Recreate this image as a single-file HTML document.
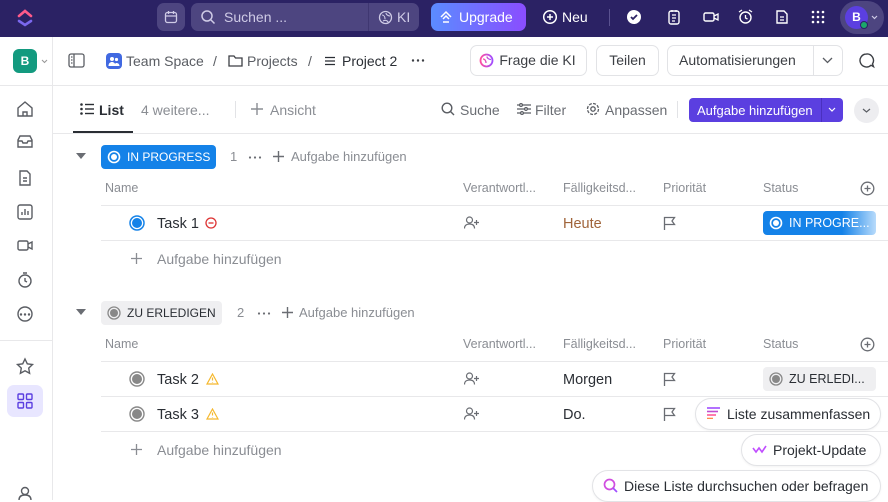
<!DOCTYPE html>
<html><head><meta charset="utf-8"><style>
*{box-sizing:border-box;margin:0;padding:0}
body{width:888px;height:500px;overflow:hidden;font-family:"Liberation Sans",sans-serif;background:#fff;position:relative;color:#2a2e34}
.a{position:absolute}
.top{left:0;top:0;width:888px;height:37px;background:#2b2264}
.t{position:absolute;white-space:nowrap}
svg{position:absolute}
.line{position:absolute;height:1px;background:#e8e8ea}
.g{color:#8a8d93}
.btn{position:absolute;border:1px solid #e2e3e6;border-radius:7px;height:31px;top:45px;font-size:14px;color:#3c3f44;line-height:29px;text-align:center}
.pill{position:absolute;border:1px solid #e2e3e6;border-radius:16px;height:32px;background:#fff;font-size:14px;color:#2a2e34;line-height:30px;box-shadow:0 1px 2px rgba(0,0,0,.05)}
.dots{position:absolute;font-size:16px;color:#6a6d73;font-weight:bold;letter-spacing:0}
</style></head><body>
<div class="a top"></div>
<svg style="left:17px;top:8px" width="16" height="20" viewBox="0 0 16 20"><path d="M2 8 L8 3 L14 8" stroke="#ff5a8a" stroke-width="2.6" fill="none" stroke-linecap="round"/><path d="M2 13 L8 17 L14 13" stroke="#7b68ee" stroke-width="2.6" fill="none" stroke-linecap="round"/></svg>
<div class="a" style="left:157px;top:3px;width:28px;height:28px;background:#4d4580;border-radius:7px"></div>
<svg style="left:164px;top:10px" width="14" height="14" viewBox="0 0 14 14"><rect x="1.5" y="2.5" width="11" height="10" rx="2" fill="none" stroke="#cfcbe6" stroke-width="1.3"/><path d="M1.5 6h11M4.5 1v3M9.5 1v3" stroke="#cfcbe6" stroke-width="1.3"/></svg>
<div class="a" style="left:191px;top:3px;width:228px;height:28px;background:#4d4580;border-radius:7px"></div>
<div class="a" style="left:368px;top:3px;width:1px;height:28px;background:#3f3771"></div>
<svg style="left:200px;top:9px" width="16" height="16" viewBox="0 0 16 16"><circle cx="7" cy="7" r="5" fill="none" stroke="#cfcbe6" stroke-width="1.5"/><path d="M11 11l3.5 3.5" stroke="#cfcbe6" stroke-width="1.5"/></svg>
<div class="t" style="left:224px;top:9px;font-size:14px;color:#cfcbe6">Suchen ...</div>
<svg style="left:378px;top:10px" width="15" height="15" viewBox="0 0 15 15"><circle cx="7.5" cy="7.5" r="6" fill="none" stroke="#cfcbe6" stroke-width="1.3"/><path d="M4 5c2 0 3 2 3 4M8 3c0 2 3 3 4 3M5 11c2-1 4-1 5 1" stroke="#cfcbe6" stroke-width="1.1" fill="none"/></svg>
<div class="t" style="left:397px;top:9px;font-size:14px;color:#cfcbe6">KI</div>
<div class="a" style="left:431px;top:3px;width:95px;height:28px;border-radius:7px;background:linear-gradient(90deg,#5b8cff,#8a4dff)"></div>
<svg style="left:439px;top:10px" width="14" height="14" viewBox="0 0 14 14"><path d="M2 7L7 2L12 7M4 9l3-3 3 3M4 12h6" stroke="#fff" stroke-width="1.5" fill="none"/></svg>
<div class="t" style="left:459px;top:9px;font-size:14px;color:#fff">Upgrade</div>
<svg style="left:542px;top:9px" width="16" height="16" viewBox="0 0 16 16"><circle cx="8" cy="8" r="6.3" fill="none" stroke="#fff" stroke-width="1.5"/><path d="M8 5v6M5 8h6" stroke="#fff" stroke-width="1.5"/></svg>
<div class="t" style="left:562px;top:9px;font-size:14px;color:#fff">Neu</div>
<div class="a" style="left:609px;top:9px;width:1px;height:17px;background:#5a5290"></div>
<svg style="left:626px;top:9px" width="16" height="16" viewBox="0 0 16 16"><circle cx="8" cy="8" r="7" fill="#fff"/><path d="M5 8l2 2 4-4" stroke="#2b2264" stroke-width="1.8" fill="none"/></svg>
<svg style="left:667px;top:9px" width="14" height="16" viewBox="0 0 14 16"><rect x="2" y="2" width="10" height="13" rx="2" fill="none" stroke="#fff" stroke-width="1.4"/><path d="M5 6h4M5 9h4M5 12h3M5 1v2M9 1v2" stroke="#fff" stroke-width="1.2"/></svg>
<svg style="left:703px;top:10px" width="16" height="14" viewBox="0 0 16 14"><rect x="1" y="3" width="10" height="8" rx="1.5" fill="none" stroke="#fff" stroke-width="1.4"/><path d="M11 6l4-2v6l-4-2" fill="none" stroke="#fff" stroke-width="1.3"/></svg>
<svg style="left:737px;top:8px" width="17" height="17" viewBox="0 0 17 17"><circle cx="8.5" cy="9.5" r="5.5" fill="none" stroke="#fff" stroke-width="1.4"/><path d="M8.5 7v3l2 1M2 4l3-2M15 4l-3-2" stroke="#fff" stroke-width="1.3" fill="none"/></svg>
<svg style="left:775px;top:9px" width="14" height="16" viewBox="0 0 14 16"><path d="M2 2h7l3 3v9H2z" fill="none" stroke="#fff" stroke-width="1.4"/><path d="M5 8h4M5 11h4" stroke="#fff" stroke-width="1.2"/></svg>
<svg style="left:811px;top:10px" width="14" height="14" viewBox="0 0 14 14" fill="#fff"><circle cx="2" cy="2" r="1.3"/><circle cx="7" cy="2" r="1.3"/><circle cx="12" cy="2" r="1.3"/><circle cx="2" cy="7" r="1.3"/><circle cx="7" cy="7" r="1.3"/><circle cx="12" cy="7" r="1.3"/><circle cx="2" cy="12" r="1.3"/><circle cx="7" cy="12" r="1.3"/><circle cx="12" cy="12" r="1.3"/></svg>
<div class="a" style="left:840px;top:1px;width:44px;height:33px;border-radius:17px;background:#4d4580"></div>
<div class="a" style="left:845px;top:6px;width:23px;height:23px;border-radius:50%;background:#5b3fe0;color:#fff;font-size:12px;font-weight:bold;text-align:center;line-height:23px">B</div>
<div class="a" style="left:860px;top:21px;width:8px;height:8px;border-radius:50%;background:#1aa86a;border:1px solid #2b2264"></div>
<svg style="left:871px;top:15px" width="7" height="5" fill="none" stroke="#cfcbe6" stroke-width="1.2"><path d="M1 1l2.5 2.5L6 1"/></svg>

<!-- sidebar -->
<div class="a" style="left:52px;top:37px;width:1px;height:463px;background:#e8e8ea"></div>
<div class="a" style="left:13px;top:49px;width:24px;height:24px;border-radius:6px;background:#139a7f;color:#fff;font-size:12px;font-weight:bold;text-align:center;line-height:24px">B</div>
<svg style="left:41px;top:59px" width="7" height="5" fill="none" stroke="#999" stroke-width="1.1"><path d="M1 1l2.5 2.5L6 1"/></svg>
<div class="a" style="left:0;top:85px;width:52px;height:1px;background:#e8e8ea"></div>
<div class="a" style="left:0;top:340px;width:52px;height:1px;background:#e8e8ea"></div>
<svg style="left:0;top:0" width="52" height="500" viewBox="0 0 52 500" fill="none" stroke="#5a5d63" stroke-width="1.4">
<path d="M18 108l7-6 7 6v8h-14z M23 116v-4h4v4"/>
<path d="M18 140l2-4h10l2 4v7h-14z M18 141h4l1 2h4l1-2h4"/>
<path d="M20 171h7l3 3v11h-10z M23 178h4M23 181h4"/>
<rect x="18" y="205" width="14" height="14" rx="2"/><path d="M22 215v-3M25 215v-6M28 215v-4"/>
<rect x="18" y="241" width="10" height="9" rx="1.5"/><path d="M28 244l4-2v7l-4-2"/>
<circle cx="25" cy="281" r="6"/><path d="M23 273h4M25 278v3l2 1"/>
<circle cx="25" cy="314" r="7"/>
<path d="M25 359l2.3 4.8 5.2.7-3.8 3.6.9 5.2-4.6-2.5-4.6 2.5.9-5.2-3.8-3.6 5.2-.7z"/>
<circle cx="25" cy="491" r="3.5"/><path d="M19 500c0-4 3-5 6-5s6 1 6 5"/>
</svg>
<svg style="left:19px;top:313px" width="14" height="3" fill="#5a5d63"><circle cx="2" cy="1.5" r="1.2"/><circle cx="6" cy="1.5" r="1.2"/><circle cx="10" cy="1.5" r="1.2"/></svg>
<div class="a" style="left:7px;top:385px;width:36px;height:32px;border-radius:7px;background:#e8e6ff"></div>
<svg style="left:17px;top:393px" width="16" height="16" viewBox="0 0 16 16" fill="none" stroke="#5b3fe0" stroke-width="1.4"><rect x="1" y="1" width="5.5" height="5.5" rx="1"/><rect x="9.5" y="1" width="5.5" height="5.5" rx="1"/><rect x="1" y="9.5" width="5.5" height="5.5" rx="1"/><rect x="9.5" y="9.5" width="5.5" height="5.5" rx="1"/></svg>

<!-- header -->
<div class="line" style="left:53px;top:85px;width:835px"></div>
<svg style="left:68px;top:53px" width="17" height="15" viewBox="0 0 17 15" fill="none" stroke="#5a5d63" stroke-width="1.3"><rect x="1" y="1" width="15" height="13" rx="2"/><path d="M6 1v13M3 4h1.5M3 7h1.5M3 10h1.5"/></svg>
<div class="a" style="left:106px;top:53px;width:16px;height:16px;border-radius:4px;background:#4169e1"></div>
<svg style="left:108px;top:56px" width="12" height="10" viewBox="0 0 12 10" fill="#fff"><circle cx="4" cy="3" r="2"/><circle cx="8.5" cy="3.5" r="1.6"/><path d="M0.5 10c0-3 2-4 3.5-4s3.5 1 3.5 4z M7 10c0-2 0-3 1.5-3s3 1 3 3z"/></svg>
<div class="t" style="left:126px;top:53px;font-size:14px;color:#5a5d63">Team Space</div>
<div class="t" style="left:213px;top:53px;font-size:14px;color:#5a5d63">/</div>
<svg style="left:228px;top:54px" width="15" height="13" viewBox="0 0 15 13" fill="none" stroke="#3c3f44" stroke-width="1.3"><path d="M1 2h5l1.5 2H14v8H1z"/></svg>
<div class="t" style="left:247px;top:53px;font-size:14px;color:#5a5d63">Projects</div>
<div class="t" style="left:308px;top:53px;font-size:14px;color:#5a5d63">/</div>
<svg style="left:325px;top:56px" width="10" height="10" stroke="#2a2e34" stroke-width="1.3"><path d="M0 1.5h10M0 5h10M0 8.5h10"/></svg>
<div class="t" style="left:342px;top:53px;font-size:14px;color:#2a2e34">Project 2</div>
<svg style="left:411px;top:59px" width="14" height="3" fill="#3c3f44"><circle cx="2" cy="1.5" r="1.2"/><circle cx="7" cy="1.5" r="1.2"/><circle cx="12" cy="1.5" r="1.2"/></svg>
<div class="btn" style="left:470px;width:117px"><span style="padding-left:18px">Frage die KI</span></div>
<svg style="left:479px;top:53px" width="15" height="15" viewBox="0 0 15 15"><defs><linearGradient id="kg" x1="0" x2="1"><stop offset="0" stop-color="#ff4fa0"/><stop offset="1" stop-color="#a04dff"/></linearGradient></defs><circle cx="7.5" cy="7.5" r="6" fill="none" stroke="url(#kg)" stroke-width="1.8"/><path d="M4 6c2 0 3 2 3 4M8 3.5c0 2 2.5 3 4 3" stroke="url(#kg)" stroke-width="1.3" fill="none"/></svg>
<div class="btn" style="left:596px;width:63px">Teilen</div>
<div class="btn" style="left:667px;width:176px;text-align:left;padding-left:11px">Automatisierungen</div>
<div class="a" style="left:813px;top:46px;width:1px;height:29px;background:#e2e3e6"></div>
<svg style="left:822px;top:57px" width="11" height="7" fill="none" stroke="#5a5d63" stroke-width="1.3"><path d="M1 1l4.5 4.5L10 1"/></svg>
<svg style="left:858px;top:52px" width="17" height="17" viewBox="0 0 17 17" fill="none" stroke="#3c3f44" stroke-width="1.4"><path d="M8.5 2a6.5 6.5 0 1 0 4.5 11.2l2.5 1.5-1-2.8A6.5 6.5 0 0 0 8.5 2z"/></svg>

<!-- tabs -->
<div class="line" style="left:53px;top:133px;width:835px"></div>
<div class="a" style="left:73px;top:131px;width:60px;height:2px;background:#2a2e34"></div>
<svg style="left:80px;top:103px" width="14" height="12" fill="#2a2e34"><circle cx="1.5" cy="1.5" r="1.3"/><circle cx="1.5" cy="6" r="1.3"/><circle cx="1.5" cy="10.5" r="1.3"/><rect x="5" y="0.8" width="9" height="1.4"/><rect x="5" y="5.3" width="9" height="1.4"/><rect x="5" y="9.8" width="9" height="1.4"/></svg>
<div class="t" style="left:99px;top:102px;font-size:14px;font-weight:bold;color:#2a2e34">List</div>
<div class="t g" style="left:141px;top:102px;font-size:14px">4 weitere...</div>
<div class="a" style="left:235px;top:101px;width:1px;height:17px;background:#e2e3e6"></div>
<svg style="left:251px;top:103px" width="12" height="12" stroke="#8a8d93" stroke-width="1.4"><path d="M6 0v12M0 6h12"/></svg>
<div class="t g" style="left:270px;top:102px;font-size:14px">Ansicht</div>
<svg style="left:441px;top:102px" width="14" height="14" fill="none" stroke="#5a5d63" stroke-width="1.4"><circle cx="6" cy="6" r="4.8"/><path d="M9.5 9.5l3.5 3.5"/></svg>
<div class="t" style="left:460px;top:102px;font-size:14px;color:#6a6d73">Suche</div>
<svg style="left:517px;top:103px" width="14" height="12" fill="none" stroke="#5a5d63" stroke-width="1.2"><path d="M0 2h14M0 6h14M0 10h14"/><circle cx="4" cy="2" r="1.4" fill="#fff"/><circle cx="9" cy="6" r="1.4" fill="#fff"/><circle cx="5" cy="10" r="1.4" fill="#fff"/></svg>
<div class="t" style="left:535px;top:102px;font-size:14px;color:#6a6d73">Filter</div>
<svg style="left:586px;top:102px" width="14" height="14" fill="none" stroke="#5a5d63" stroke-width="1.3"><circle cx="7" cy="7" r="2.2"/><circle cx="7" cy="7" r="5.5" stroke-dasharray="3 1.3"/></svg>
<div class="t" style="left:605px;top:102px;font-size:14px;color:#6a6d73">Anpassen</div>
<div class="a" style="left:677px;top:101px;width:1px;height:17px;background:#e2e3e6"></div>
<div class="a" style="left:689px;top:98px;width:154px;height:24px;border-radius:4px;background:#5b3fe0"></div>
<div class="a" style="left:821px;top:98px;width:1px;height:24px;background:#4a30c0"></div>
<div class="t" style="left:697px;top:103px;font-size:13px;color:#fff">Aufgabe hinzufügen</div>
<svg style="left:828px;top:107px" width="8" height="5" fill="none" stroke="#fff" stroke-width="1.2"><path d="M1 1l3 3 3-3"/></svg>
<div class="a" style="left:854px;top:98px;width:25px;height:25px;border-radius:50%;background:#ededf0"></div>
<svg style="left:862px;top:108px" width="9" height="5" fill="none" stroke="#5a5d63" stroke-width="1.2"><path d="M1 1l3.5 3L8 1"/></svg>

<!-- group 1 -->
<svg style="left:76px;top:153px" width="10" height="7" fill="#6a6d73"><path d="M0 0h10L5 6z"/></svg>
<div class="a" style="left:101px;top:145px;width:115px;height:24px;border-radius:4px;background:#1482e8"></div>
<svg style="left:107px;top:150px" width="14" height="14" fill="none" stroke="#fff"><circle cx="7" cy="7" r="5.5" stroke-width="1.6"/><circle cx="7" cy="7" r="3" fill="#fff" stroke="none"/></svg>
<div class="t" style="left:127px;top:150px;font-size:12px;color:#fff">IN PROGRESS</div>
<div class="t g" style="left:230px;top:149px;font-size:13px">1</div>
<svg style="left:248px;top:156px" width="14" height="3" fill="#6a6d73"><circle cx="2" cy="1.5" r="1.1"/><circle cx="7" cy="1.5" r="1.1"/><circle cx="12" cy="1.5" r="1.1"/></svg>
<svg style="left:273px;top:151px" width="11" height="11" stroke="#6a6d73" stroke-width="1.4"><path d="M5.5 0v11M0 5.5h11"/></svg>
<div class="t g" style="left:291px;top:149px;font-size:13px">Aufgabe hinzufügen</div>
<div class="t g" style="left:105px;top:181px;font-size:12.5px">Name</div>
<div class="t g" style="left:463px;top:181px;font-size:12.5px">Verantwortl...</div>
<div class="t g" style="left:563px;top:181px;font-size:12.5px">Fälligkeitsd...</div>
<div class="t g" style="left:663px;top:181px;font-size:12.5px">Priorität</div>
<div class="t g" style="left:763px;top:181px;font-size:12.5px">Status</div>
<svg style="left:860px;top:181px" width="15" height="15" fill="none" stroke="#6a6d73" stroke-width="1.3"><circle cx="7.5" cy="7.5" r="6.3"/><path d="M7.5 4.5v6M4.5 7.5h6"/></svg>
<div class="line" style="left:101px;top:205px;width:787px"></div>
<svg style="left:129px;top:215px" width="16" height="16"><circle cx="8" cy="8" r="7" fill="none" stroke="#1482e8" stroke-width="1.5"/><circle cx="8" cy="8" r="5" fill="#1482e8"/></svg>
<div class="t" style="left:157px;top:216px;font-size:14.5px">Task 1</div>
<svg style="left:205px;top:217px" width="12" height="12" fill="none" stroke="#d33" stroke-width="1.3"><circle cx="6" cy="6" r="5"/><path d="M3.5 6h5"/></svg>
<svg style="left:464px;top:216px" width="15" height="13" fill="none" stroke="#6a6d73" stroke-width="1.2"><circle cx="5.5" cy="4" r="3"/><path d="M0.5 12.5c0-3 2-4.5 5-4.5s5 1.5 5 4.5M12.5 4v5M10 6.5h5"/></svg>
<div class="t" style="left:563px;top:216px;font-size:14.5px;color:#a0643a">Heute</div>
<svg style="left:663px;top:216px" width="13" height="14" fill="none" stroke="#6a6d73" stroke-width="1.3"><path d="M1.5 14V1.5h10l-2.5 3.5 2.5 3.5h-10"/></svg>
<div class="a" style="left:763px;top:211px;width:113px;height:24px;border-radius:4px;background:linear-gradient(90deg,#1482e8 0%,#1482e8 70%,#b8dbfb 100%)"></div>
<svg style="left:769px;top:216px" width="14" height="14" fill="none" stroke="#fff"><circle cx="7" cy="7" r="5.5" stroke-width="1.6"/><circle cx="7" cy="7" r="3" fill="#fff" stroke="none"/></svg>
<div class="t" style="left:789px;top:216px;font-size:12.5px;color:#fff">IN PROGRE...</div>
<div class="line" style="left:101px;top:240px;width:787px"></div>
<svg style="left:131px;top:253px" width="11" height="11" stroke="#8a8d93" stroke-width="1.3"><path d="M5.5 0v11M0 5.5h11"/></svg>
<div class="t g" style="left:157px;top:251px;font-size:14px">Aufgabe hinzufügen</div>

<!-- group 2 -->
<svg style="left:76px;top:309px" width="10" height="7" fill="#6a6d73"><path d="M0 0h10L5 6z"/></svg>
<div class="a" style="left:101px;top:301px;width:121px;height:24px;border-radius:4px;background:#efeff1"></div>
<svg style="left:107px;top:306px" width="14" height="14"><circle cx="7" cy="7" r="6" fill="none" stroke="#888" stroke-width="1.3"/><circle cx="7" cy="7" r="4" fill="#888"/></svg>
<div class="t" style="left:127px;top:306px;font-size:12px;color:#2a2e34">ZU ERLEDIGEN</div>
<div class="t g" style="left:237px;top:305px;font-size:13px">2</div>
<svg style="left:257px;top:312px" width="14" height="3" fill="#6a6d73"><circle cx="2" cy="1.5" r="1.1"/><circle cx="7" cy="1.5" r="1.1"/><circle cx="12" cy="1.5" r="1.1"/></svg>
<svg style="left:282px;top:307px" width="11" height="11" stroke="#6a6d73" stroke-width="1.4"><path d="M5.5 0v11M0 5.5h11"/></svg>
<div class="t g" style="left:299px;top:305px;font-size:13px">Aufgabe hinzufügen</div>
<div class="t g" style="left:105px;top:337px;font-size:12.5px">Name</div>
<div class="t g" style="left:463px;top:337px;font-size:12.5px">Verantwortl...</div>
<div class="t g" style="left:563px;top:337px;font-size:12.5px">Fälligkeitsd...</div>
<div class="t g" style="left:663px;top:337px;font-size:12.5px">Priorität</div>
<div class="t g" style="left:763px;top:337px;font-size:12.5px">Status</div>
<svg style="left:860px;top:337px" width="15" height="15" fill="none" stroke="#6a6d73" stroke-width="1.3"><circle cx="7.5" cy="7.5" r="6.3"/><path d="M7.5 4.5v6M4.5 7.5h6"/></svg>
<div class="line" style="left:101px;top:361px;width:787px"></div>
<svg style="left:129px;top:371px" width="16" height="16"><circle cx="8" cy="8" r="7" fill="none" stroke="#888" stroke-width="1.4"/><circle cx="8" cy="8" r="5" fill="#888"/></svg>
<div class="t" style="left:157px;top:372px;font-size:14.5px">Task 2</div>
<svg style="left:206px;top:373px" width="13" height="12" fill="none" stroke="#f5b82e" stroke-width="1.2"><path d="M6.5 1L12 11H1z M6.5 4.5v3M6.5 9v.5"/></svg>
<svg style="left:464px;top:372px" width="15" height="13" fill="none" stroke="#6a6d73" stroke-width="1.2"><circle cx="5.5" cy="4" r="3"/><path d="M0.5 12.5c0-3 2-4.5 5-4.5s5 1.5 5 4.5M12.5 4v5M10 6.5h5"/></svg>
<div class="t" style="left:563px;top:372px;font-size:14.5px">Morgen</div>
<svg style="left:663px;top:372px" width="13" height="14" fill="none" stroke="#6a6d73" stroke-width="1.3"><path d="M1.5 14V1.5h10l-2.5 3.5 2.5 3.5h-10"/></svg>
<div class="a" style="left:763px;top:367px;width:113px;height:24px;border-radius:4px;background:#efeff1"></div>
<svg style="left:769px;top:372px" width="14" height="14"><circle cx="7" cy="7" r="6" fill="none" stroke="#888" stroke-width="1.3"/><circle cx="7" cy="7" r="4" fill="#888"/></svg>
<div class="t" style="left:789px;top:372px;font-size:12.5px">ZU ERLEDI...</div>
<div class="line" style="left:101px;top:396px;width:787px"></div>
<svg style="left:129px;top:406px" width="16" height="16"><circle cx="8" cy="8" r="7" fill="none" stroke="#888" stroke-width="1.4"/><circle cx="8" cy="8" r="5" fill="#888"/></svg>
<div class="t" style="left:157px;top:407px;font-size:14.5px">Task 3</div>
<svg style="left:206px;top:408px" width="13" height="12" fill="none" stroke="#f5b82e" stroke-width="1.2"><path d="M6.5 1L12 11H1z M6.5 4.5v3M6.5 9v.5"/></svg>
<svg style="left:464px;top:407px" width="15" height="13" fill="none" stroke="#6a6d73" stroke-width="1.2"><circle cx="5.5" cy="4" r="3"/><path d="M0.5 12.5c0-3 2-4.5 5-4.5s5 1.5 5 4.5M12.5 4v5M10 6.5h5"/></svg>
<div class="t" style="left:563px;top:407px;font-size:14.5px">Do.</div>
<svg style="left:663px;top:407px" width="13" height="14" fill="none" stroke="#6a6d73" stroke-width="1.3"><path d="M1.5 14V1.5h10l-2.5 3.5 2.5 3.5h-10"/></svg>
<div class="line" style="left:101px;top:431px;width:787px"></div>
<svg style="left:131px;top:444px" width="11" height="11" stroke="#8a8d93" stroke-width="1.3"><path d="M5.5 0v11M0 5.5h11"/></svg>
<div class="t g" style="left:157px;top:442px;font-size:14px">Aufgabe hinzufügen</div>

<!-- pills -->
<div class="pill" style="left:695px;top:398px;width:186px;padding-left:31px">Liste zusammenfassen</div>
<svg style="left:707px;top:407px" width="13" height="12"><path d="M0 1h13" stroke="#a04dff" stroke-width="1.6"/><path d="M0 4.5h11" stroke="#c04dd0" stroke-width="1.6"/><path d="M0 8h9" stroke="#ff5a9a" stroke-width="1.6"/><path d="M0 11.5h6" stroke="#ff8a4a" stroke-width="1.6"/></svg>
<div class="pill" style="left:741px;top:434px;width:140px;padding-left:31px">Projekt-Update</div>
<svg style="left:752px;top:445px" width="15" height="9" fill="none" stroke-width="1.6"><path d="M1 3l3 4 3-4 3 4 4-6" stroke="#c04dff"/></svg>
<div class="pill" style="left:592px;top:470px;width:289px;padding-left:31px">Diese Liste durchsuchen oder befragen</div>
<svg style="left:603px;top:478px" width="15" height="15" fill="none" stroke-width="1.7"><circle cx="6.5" cy="6.5" r="5" stroke="#d04de0"/><path d="M10 10l4 4" stroke="#a04dff"/></svg>
</body></html>
